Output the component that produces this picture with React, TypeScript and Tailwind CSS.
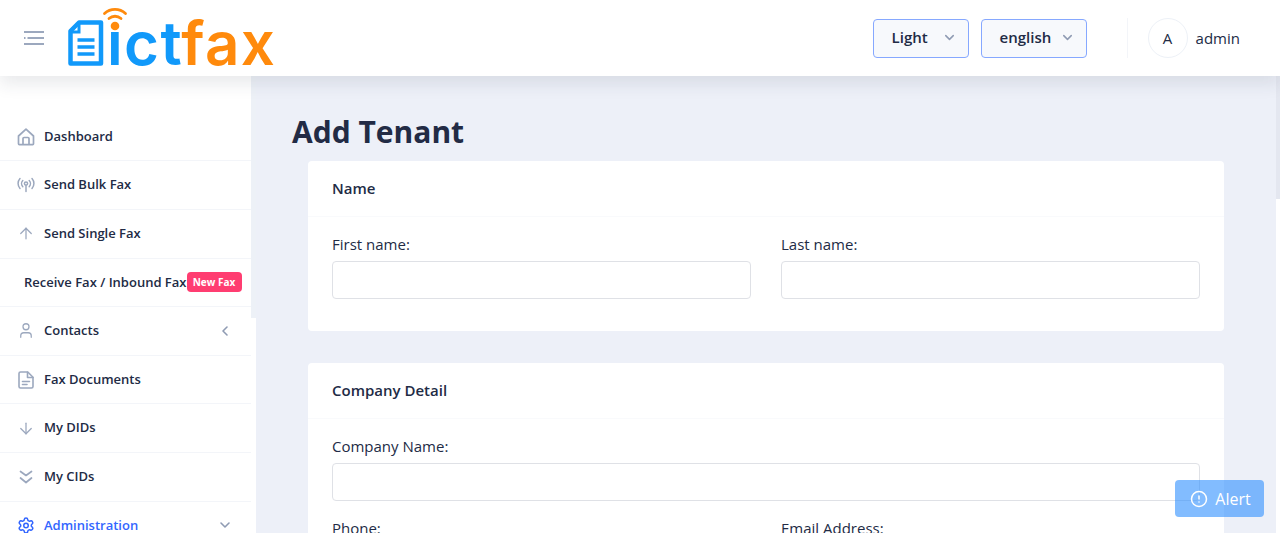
import { ArrowDown, ArrowUp, ChevronDown, ChevronLeft, CircleAlert, Settings, User } from "lucide-react";
import type { ReactNode } from "react";

const font = { fontFamily: '"Open Sans", "Noto Sans", sans-serif' };

function HomeIcon() {
  return (
    <svg viewBox="0 0 18 18" className="h-[18px] w-[18px]" fill="none" stroke="#9ca8be" strokeWidth="1.700" strokeLinejoin="round">
      <path d="M1.500 8 9 1.200 16.500 8v7.800a.8.8 0 0 1-.8.8H2.300a.8.8 0 0 1-.8-.8Z" />
      <path d="M6 16.600V10.500a1 1 0 0 1 1-1h4a1 1 0 0 1 1 1v6.100" />
    </svg>
  );
}

function BulkIcon() {
  return (
    <svg viewBox="0 0 18 18" className="h-[18px] w-[18px]" fill="none" stroke="#9ca8be" strokeWidth="1.500" strokeLinecap="round">
      <circle cx="9" cy="7.500" r="1.600" />
      <path d="M9 9.500V15.500" />
      <path d="M5.800 4.500a4.500 4.500 0 0 0 0 6.200M12.200 4.500a4.500 4.500 0 0 1 0 6.200" />
      <path d="M3 2.500a7.500 7.500 0 0 0 0 10M15 2.500a7.500 7.500 0 0 1 0 10" />
    </svg>
  );
}

function DocIcon() {
  return (
    <svg viewBox="0 0 16 18" className="h-[18px] w-4" fill="none" stroke="#9ca8be" strokeWidth="1.600" strokeLinejoin="round" strokeLinecap="round">
      <path d="M2.500 1h7.300L15 6.200v9.300a1.500 1.500 0 0 1-1.500 1.500h-11A1.500 1.500 0 0 1 1 15.500v-13A1.500 1.500 0 0 1 2.500 1Z" />
      <path d="M9.500 1.200V6.500H15" />
      <path d="M4.500 10.500h7M4.500 13.500h4.500" />
    </svg>
  );
}

function DoubleDownIcon() {
  return (
    <svg viewBox="0 0 14 14" className="h-[14px] w-[14px]" fill="none" stroke="#9ca8be" strokeWidth="1.700" strokeLinecap="round" strokeLinejoin="round">
      <path d="m1.500 1.500 5.500 4 5.500-4" />
      <path d="m1.500 8 5.500 4.500L12.500 8" />
    </svg>
  );
}

function MenuIcon() {
  return (
    <svg viewBox="0 0 22 16" className="h-4 w-[22px]" fill="none" stroke="#9ca8be" strokeWidth="2">
      <path d="M1 2h20" />
      <path d="M1 8h1.500M4.500 8H21" />
      <path d="M1 14h20" />
    </svg>
  );
}

function Logo() {
  return (
    <div className="flex items-end">
      <svg viewBox="0 0 36 46" className="h-[46px] w-9" fill="none">
        <path d="M11 2.500h22v41H2.500V11Z" stroke="#1199fa" strokeWidth="4.500" strokeLinejoin="round" />
        <path d="M11 4v8H4" stroke="#1199fa" strokeWidth="3" />
        <path d="M9.500 20h17M9.500 27h17M9.500 34h17" stroke="#1199fa" strokeWidth="3.500" />
      </svg>
      <div className="relative -mb-[9px] ml-[3px] text-[60px] leading-[64px] font-semibold tracking-[1.400px] whitespace-nowrap" style={{ fontFamily: "Inter, sans-serif" }}>
        <span className="text-[#1199fa]">ıct</span>
        <span className="text-[#ff8a0c]">fax</span>
        <svg viewBox="0 0 26 28" className="absolute -top-[4px] -left-[5px] h-7 w-[26px]" fill="none" stroke="#ff8a0c" strokeWidth="2.800" strokeLinecap="round">
          <path d="M2.500 6.500C8.500 1 17.500 1 23.500 6.500" />
          <path d="M7 11.500c3.500-3 8.500-3 12 0" />
          <circle cx="13" cy="19" r="4.300" fill="#ff8a0c" stroke="none" />
        </svg>
      </div>
    </div>
  );
}

function SelectBox({ label, width }: { label: string; width: string }) {
  return (
    <div className={`flex h-[39px] items-center justify-between rounded-[4px] border border-[#86a8ff] bg-[#f7f9fc] pr-[11px] pb-[1px] pl-[18px] text-[15px] font-semibold text-[#222b45] ${width}`}>
      <span>{label}</span>
      <ChevronDown className="h-[15px] w-[15px] text-[#8f9bb3]" strokeWidth={2.400} />
    </div>
  );
}

function NavRow({ icon, label, chevron, active }: { icon: ReactNode; label: string; chevron?: ReactNode; active?: boolean }) {
  return (
    <div className="flex h-[48.600px] flex-none items-center border-b border-[#f3f5f9] pr-[18px] pl-[17px]">
      <span className="flex w-[18px] justify-center text-[#9ca8be]">{icon}</span>
      <span className={`ml-[9px] flex-1 text-[13px] font-semibold ${active ? "text-[#3366ff]" : "text-[#222b45]"}`}>{label}</span>
      {chevron}
    </div>
  );
}

function Sidebar() {
  return (
    <aside className="flex w-[256px] flex-none bg-white">
      <div className="flex w-[251px] flex-none flex-col pt-[36.800px]">
        <NavRow icon={<HomeIcon />} label="Dashboard" />
        <NavRow icon={<BulkIcon />} label="Send Bulk Fax" />
        <NavRow icon={<ArrowUp className="h-[21px] w-[21px]" strokeWidth={1.700} />} label="Send Single Fax" />
        <div className="flex h-[48.600px] flex-none items-center border-b border-[#f3f5f9] pl-[24px] text-[13px] font-semibold whitespace-nowrap text-[#222b45]">
          <span>Receive Fax / Inbound Fax</span>
          <span className="flex h-5 w-[55px] flex-none items-center justify-center rounded-[4px] bg-[#ff3d71] text-[10px] font-bold text-white">New Fax</span>
        </div>
        <NavRow
          icon={<User className="h-[21px] w-[21px]" strokeWidth={1.700} />}
          label="Contacts"
          chevron={<ChevronLeft className="h-4 w-4 text-[#8f9bb3]" strokeWidth={2.400} />}
        />
        <NavRow icon={<DocIcon />} label="Fax Documents" />
        <NavRow icon={<ArrowDown className="h-[21px] w-[21px]" strokeWidth={1.700} />} label="My DIDs" />
        <NavRow icon={<DoubleDownIcon />} label="My CIDs" />
        <NavRow
          icon={<Settings className="h-[19px] w-[19px] text-[#3366ff]" strokeWidth={2} />}
          label="Administration"
          chevron={<ChevronDown className="h-4 w-4 text-[#8f9bb3]" strokeWidth={2.400} />}
          active
        />
      </div>
      <div className="flex w-[5px] flex-col">
        <div className="h-[242px] flex-none bg-[#edf1f7]" />
      </div>
    </aside>
  );
}

function Field({ label, className }: { label: string; className?: string }) {
  return (
    <div className={className}>
      <div className="mb-[8px] text-[15px] leading-[18px] text-[#222b45]">{label}</div>
      <div className="h-[38px] rounded-[4px] border border-[#dfe1e6] bg-white" />
    </div>
  );
}

function Card({ title, children }: { title: string; children: ReactNode }) {
  return (
    <section className="mx-[52px] rounded-[4px] bg-white">
      <div className="flex h-[56px] items-center border-b border-[#f9fafc] px-6 text-[15px] font-semibold text-[#222b45]">{title}</div>
      <div className="px-6 pt-[18px] pb-8">{children}</div>
    </section>
  );
}

export default function App() {
  return (
    <div className="relative flex h-[533px] flex-col overflow-hidden bg-[#edf0f8]" style={font}>
      <header className="z-10 flex h-[76px] flex-none items-center bg-white pr-10 pl-[23px] shadow-[0_8px_16px_0_rgba(44,51,73,0.1)]">
        <MenuIcon />
        <div className="ml-[23px]">
          <Logo />
        </div>
        <div className="ml-auto flex items-center gap-3">
          <SelectBox label="Light" width="w-[96px]" />
          <SelectBox label="english" width="w-[106px]" />
        </div>
        <div className="ml-10 flex h-10 items-center border-l border-[#f3f5f9] pl-5">
          <div className="flex h-10 w-10 items-center justify-center rounded-full border border-[#edf1f7] text-[15px] text-[#222b45]">A</div>
          <span className="ml-2 text-[15px] text-[#222b45]">admin</span>
        </div>
      </header>
      <div className="flex min-h-0 flex-1">
        <Sidebar />
        <main className="min-w-0 flex-1 overflow-hidden">
          <h1 className="mt-[35px] mb-[9px] ml-[36px] text-[30px] leading-[41px] font-bold text-[#222b45]">Add Tenant</h1>
          <Card title="Name">
            <div className="grid grid-cols-2 gap-[30px]">
              <Field label="First name:" />
              <Field label="Last name:" />
            </div>
          </Card>
          <div className="h-8" />
          <Card title="Company Detail">
            <Field label="Company Name:" />
            <div className="mt-[18px] grid grid-cols-2 gap-[30px]">
              <Field label="Phone:" />
              <Field label="Email Address:" />
            </div>
          </Card>
        </main>
        <div className="flex w-1 flex-none flex-col bg-white">
          <div className="h-[123px] flex-none bg-[#e4e7f0]" />
        </div>
      </div>
      <div className="absolute top-[480px] left-[1175px] flex h-[37px] w-[89px] items-center justify-center gap-[7px] rounded-[4px] bg-[#2f8fff]/60 pl-[2px] text-[16px] text-white">
        <CircleAlert className="h-[18px] w-[18px]" strokeWidth={2} />
        <span>Alert</span>
      </div>
    </div>
  );
}
